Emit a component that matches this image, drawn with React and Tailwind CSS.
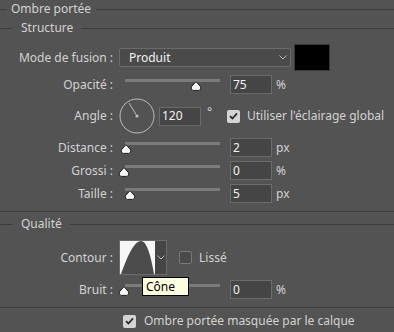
import clsx from 'clsx';

const font = { fontFamily: '"Noto Sans", "Open Sans", sans-serif' };

function Line({ className }) {
  return <div className={clsx('h-px bg-[#3c3c3c]', className)} />;
}

function Thumb({ center }) {
  // center is the x of the tip, in page pixels
  return (
    <svg
      className="absolute top-[6px]"
      style={{ left: center - 6 - 118 }}
      width="12"
      height="10"
      viewBox="0 0 12 10"
    >
      <path
        d="M6 0.6 L10.8 6 Q11.4 9.4 8.6 9.4 L3.4 9.4 Q0.6 9.4 1.2 6 Z"
        fill="#f4f4f4"
        stroke="#1e1e1e"
        strokeWidth="1"
      />
    </svg>
  );
}

function Slider({ center }) {
  return (
    <div className="relative ml-[2px] h-[19px] w-[107px] shrink-0">
      <div className="absolute left-[7px] top-[4px] h-[3px] w-[95px] bg-[#7b7b7b]" />
      <Thumb center={center} />
    </div>
  );
}

function NumInput({ value, className }) {
  return (
    <div
      className={clsx(
        'flex h-[19px] w-[42px] shrink-0 items-center border border-[#6b6b6b] bg-[#454545] pl-[2px] text-[12px] text-[#f2f2f2]',
        className
      )}
    >
      {value}
    </div>
  );
}

function Label({ children }) {
  return (
    <div className="w-[116px] shrink-0 pr-[3px] text-right text-[12px] text-[#d2d2d2]">
      {children}
    </div>
  );
}

function Check({ checked }) {
  if (!checked) {
    return (
      <div className="h-[13px] w-[13px] shrink-0 rounded-[2px] border border-[#7a7a7a] bg-[#4a4a4a]" />
    );
  }
  return (
    <div className="flex h-[13px] w-[13px] shrink-0 items-center justify-center rounded-[2px] bg-[#d4d4d4]">
      <svg width="9" height="8" viewBox="0 0 9 8">
        <path d="M1 4.2 L3.4 6.5 L8 1.3" fill="none" stroke="#2b2b2b" strokeWidth="1.8" />
      </svg>
    </div>
  );
}

function SliderRow({ label, center, value, unit, className }) {
  return (
    <div className={clsx('flex h-[19px] items-center', className)}>
      <Label>{label}</Label>
      <Slider center={center} />
      <NumInput value={value} className="ml-[5px]" />
      <span className="ml-[4px] text-[12px] text-[#d2d2d2]">{unit}</span>
    </div>
  );
}

function Chevron({ className }) {
  return (
    <svg className={className} width="8" height="5" viewBox="0 0 8 5">
      <path d="M0.5 0.5 L4 4 L7.5 0.5" fill="none" stroke="#b8b8b8" strokeWidth="1" />
    </svg>
  );
}

export default function App() {
  return (
    <div
      className="relative h-[332px] w-[394px] overflow-hidden bg-[#535353] text-[#d2d2d2]"
      style={font}
    >
      {/* Ombre portée */}
      <div className="flex h-[18px] items-center">
        <Line className="w-[7px]" />
        <span className="ml-[4px] text-[12px]">Ombre portée</span>
        <Line className="ml-[5px] flex-1" />
      </div>
      {/* Structure */}
      <div className="mt-px flex h-[18px] items-center">
        <Line className="w-[12px]" />
        <span className="ml-[9px] text-[12px]">Structure</span>
        <Line className="ml-[8px] flex-1" />
      </div>

      <div className="mt-[7px] flex h-[27px] items-center">
        <Label>Mode de fusion :</Label>
        <div className="ml-[3px] flex h-[19px] w-[172px] items-center justify-between rounded-[2px] border border-[#6b6b6b] bg-[#4a4a4a] pl-[9px] pr-[3px] text-[12px] text-[#f2f2f2]">
          <span>Produit</span>
          <Chevron />
        </div>
        <div className="ml-[3px] h-[27px] w-[36px] border border-[#3a3a3a] bg-black" />
      </div>

      <SliderRow label="Opacité :" center={196} value="75" unit="%" className="mt-[4px]" />

      <div className="mt-[4px] flex h-[36px] items-center">
        <Label>Angle :</Label>
        <svg className="ml-[3px] shrink-0" width="36" height="36" viewBox="0 0 36 36">
          <circle cx="18" cy="18" r="17" fill="none" stroke="#bdbdbd" strokeWidth="1" />
          <line x1="18" y1="18" x2="10" y2="5" stroke="#bdbdbd" strokeWidth="1" />
          <circle cx="18" cy="18" r="1.6" fill="#bdbdbd" />
        </svg>
        <NumInput value="120" className="ml-[4px] w-[41px]" />
        <span className="-mt-[8px] ml-[6px] w-[20px] text-[12px]">°</span>
        <Check checked />
        <span className="ml-[7px] text-[12px]">Utiliser l'éclairage global</span>
      </div>

      <SliderRow label="Distance :" center={126} value="2" unit="px" className="mt-[4px]" />
      <SliderRow label="Grossi :" center={124} value="0" unit="%" className="mt-[4px]" />
      <SliderRow label="Taille :" center={130} value="5" unit="px" className="mt-[4px]" />

      <Line className="mt-[8px]" />

      {/* Qualité */}
      <div className="mt-[3px] flex h-[18px] items-center">
        <Line className="w-[12px]" />
        <span className="ml-[9px] text-[12px]">Qualité</span>
        <Line className="ml-[8px] flex-1" />
      </div>

      <div className="mt-[7px] flex h-[35px] items-center">
        <Label>Contour :</Label>
        <div className="ml-[3px] flex h-[35px] w-[48px] border border-[#6b6b6b]">
          <svg width="35" height="33" viewBox="0 0 35 33" className="shrink-0 bg-[#f7f7f7]">
            <path d="M1 33 C7 16 14 0 21 0 C27 0 31 16 34 33 Z" fill="#4b4b4b" />
          </svg>
          <div className="flex flex-1 items-center justify-center bg-[#454545]">
            <Chevron />
          </div>
        </div>
        <div className="ml-[12px]">
          <Check />
        </div>
        <span className="ml-[7px] text-[12px]">Lissé</span>
      </div>

      <SliderRow label="Bruit :" center={124} value="0" unit="%" className="mt-[5px]" />

      <Line className="mt-[8px]" />

      <div className="mt-[4px] flex h-[18px] items-center pl-[123px]">
        <Check checked />
        <span className="ml-[8px] text-[12px]">Ombre portée masquée par le calque</span>
      </div>

      {/* tooltip */}
      <div className="absolute left-[142px] top-[277px] flex h-[19px] w-[47px] items-center border border-black bg-[#ffffe1] pl-[3px] text-[12px] text-black">
        Cône
      </div>
    </div>
  );
}
